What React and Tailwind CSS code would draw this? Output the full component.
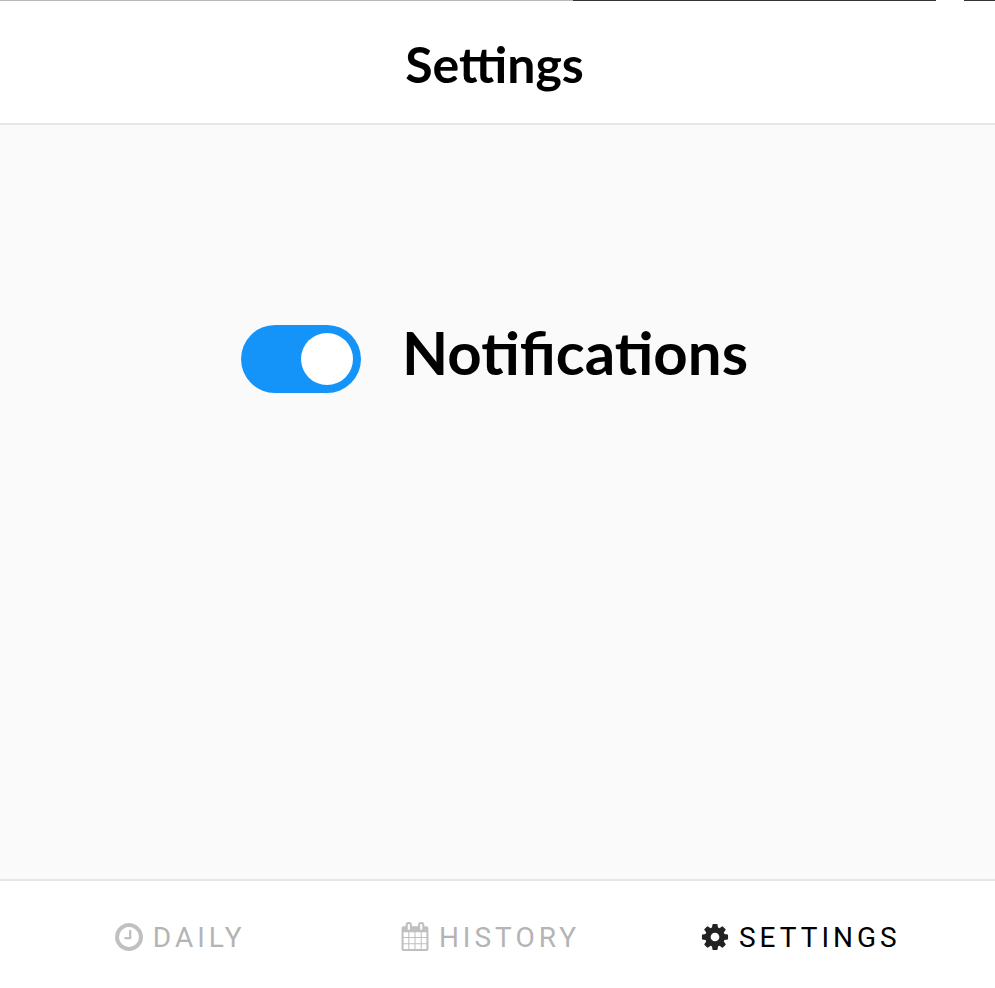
import { useState } from "react";

function ClockIcon() {
  return (
    <svg viewBox="0 0 1536 1536" className="size-7 shrink-0 text-[#c0c0c0]" fill="currentColor" aria-hidden="true">
      <path d="M896 416v448q0 14-9 23t-23 9H544q-14 0-23-9t-9-23v-64q0-14 9-23t23-9h224V416q0-14 9-23t23-9h64q14 0 23 9t9 23zm416 352q0-148-73-273t-198-198-273-73-273 73-198 198-73 273 73 273 198 198 273 73 273-73 198-198 73-273zm224 0q0 209-103 385.500T1153.500 1433 768 1536t-385.500-103T103 1153.500 0 768t103-385.500T382.500 103 768 0t385.500 103T1433 382.500 1536 768z" />
    </svg>
  );
}

function CalendarIcon() {
  return (
    <svg viewBox="0 0 1664 1792" className="h-[29px] w-7 shrink-0 text-[#c0c0c0]" fill="currentColor" aria-hidden="true">
      <path d="M128 1664h288v-288H128v288zm352 0h320v-288H480v288zm-352-352h288V992H128v320zm352 0h320V992H480v320zM128 928h288V640H128v288zm736 736h320v-288H864v288zM480 928h320V640H480v288zm768 736h288v-288h-288v288zm-384-352h320V992H864v320zM512 448V160q0-13-9.500-22.500T480 128h-64q-13 0-22.500 9.500T384 160v288q0 13 9.500 22.500T416 480h64q13 0 22.500-9.500T512 448zm736 864h288V992h-288v320zM864 928h320V640H864v288zm384 0h288V640h-288v288zm32-480V160q0-13-9.500-22.500T1248 128h-64q-13 0-22.500 9.500T1152 160v288q0 13 9.500 22.500T1184 480h64q13 0 22.500-9.500T1280 448zm384-64v1280q0 52-38 90t-90 38H128q-52 0-90-38t-38-90V384q0-52 38-90t90-38h128v-96q0-66 47-113T416 0h64q66 0 113 47t47 113v96h384v-96q0-66 47-113t113-47h64q66 0 113 47t47 113v96h128q52 0 90 38t38 90z" />
    </svg>
  );
}

function GearIcon() {
  return (
    <svg viewBox="-55 -55 1646 1646" className="size-7 shrink-0 text-[#222222]" fill="currentColor" aria-hidden="true">
      <path d="M1024 768q0-106-75-181t-181-75-181 75-75 181 75 181 181 75 181-75 75-181zm512-109v222q0 12-8 23t-20 13l-185 28q-19 54-39 91 35 50 107 138 10 12 10 25t-9 23q-27 37-99 108t-94 71q-12 0-26-9l-138-108q-44 23-91 38-16 136-29 186-7 28-36 28H657q-14 0-24.500-8.500T621 1506l-28-184q-49-16-90-37l-141 107q-10 9-25 9-14 0-25-11-126-114-165-168-7-10-7-23 0-12 8-23 15-21 51-66.500t54-70.500q-27-50-41-99L29 913q-13-2-21-12.500T0 877V655q0-12 8-23t19-13l186-28q14-46 39-92-40-57-107-138-10-12-10-24 0-10 9-23 26-36 98.500-107.500T337 135q13 0 26 10l138 107q44-23 91-38 16-136 29-186 7-28 36-28h222q14 0 24.500 8.500T915 30l28 184q49 16 90 37l142-107q9-9 24-9 13 0 25 10 129 119 165 170 7 8 7 22 0 12-8 23-15 21-51 66.500t-54 70.500q26 50 41 98l183 28q13 2 21 12.500t8 23.500z" />
    </svg>
  );
}

const tabs = [
  { label: "DAILY", Icon: ClockIcon, color: "text-[#b4b4b4]" },
  { label: "HISTORY", Icon: CalendarIcon, color: "text-[#b4b4b4]" },
  { label: "SETTINGS", Icon: GearIcon, color: "text-black" },
];

export default function App() {
  const [enabled, setEnabled] = useState(true);
  return (
    <div className="flex min-h-screen flex-col bg-[#fafafa] font-['Lato',sans-serif] text-black">
      <div className="flex h-px bg-white" aria-hidden="true">
        <div className="grow-[573] bg-[#b8b8b8]" />
        <div className="grow-[363] bg-[#333333]" />
        <div className="w-7" />
        <div className="w-[31px] bg-[#333333]" />
      </div>
      <header className="flex h-[124px] items-center justify-center border-b-2 border-[#e6e6e6] bg-white pt-1 pr-1.5">
        <h1 className="text-[50px] leading-16 font-bold">Settings</h1>
      </header>
      <main className="flex grow justify-center pt-[200px] pr-1.5">
        <label className="flex h-[68px] items-center gap-[41px]">
          <input
            type="checkbox"
            role="switch"
            checked={enabled}
            onChange={(e) => setEnabled(e.target.checked)}
            className="h-[68px] w-[120px] appearance-none rounded-full bg-[#ccc] p-2 before:block before:size-[52px] before:rounded-full before:bg-white checked:bg-[#1494f8] checked:before:translate-x-[52px]"
          />
          <span className="pb-3.5 text-[60px] leading-[68px] font-bold">Notifications</span>
        </label>
      </main>
      <nav className="grid h-[109px] grid-cols-3 border-t-2 border-[#e6e6e6] bg-white pt-1 pr-[39px] pl-[25px] font-['Roboto',sans-serif] text-[28px]">
        {tabs.map(({ label, Icon, color }) => (
          <a key={label} href="#" className={`flex items-center justify-center gap-2.5 tracking-[4px] ${color}`}>
            <Icon />
            <span className="pt-0.5">{label}</span>
          </a>
        ))}
      </nav>
    </div>
  );
}
